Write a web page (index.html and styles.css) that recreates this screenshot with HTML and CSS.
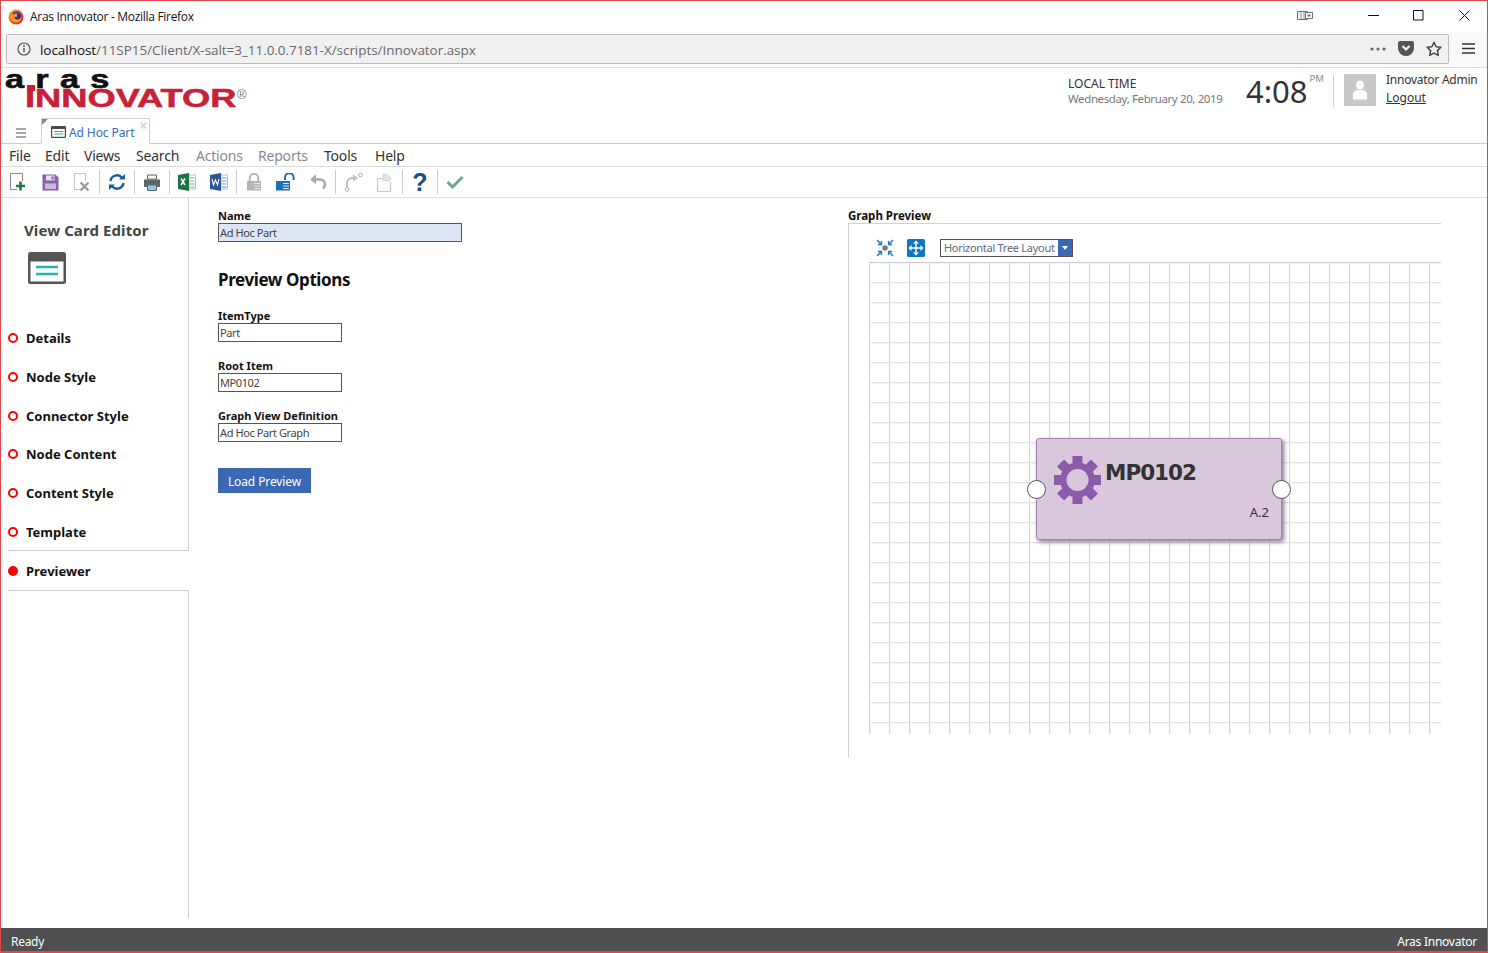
FILE: index.html
```html
<!DOCTYPE html>
<html lang="en">
<head>
<meta charset="utf-8">
<title>Aras Innovator - Mozilla Firefox</title>
<link rel="stylesheet" href="styles.css">
</head>
<body>
<div class="window">
  <div class="titlebar">
    <svg class="ff-logo" width="16" height="16" viewBox="0 0 16 16"><defs><linearGradient id="ffg" x1="0" y1="0" x2="1" y2="1"><stop offset="0" stop-color="#ffb020"/><stop offset="0.55" stop-color="#f2532a"/><stop offset="1" stop-color="#c8102e"/></linearGradient></defs><circle cx="8" cy="8" r="7.5" fill="url(#ffg)"/><circle cx="8.5" cy="7" r="4.6" fill="#2f3a8f"/><path d="M3 3.5C1.5 7 3 13 8 13.5c3.5.3 5.500-2.500 5.500-5.500-1 2-3 3-5 2.600C6.500 10.200 5.700 8.600 7 7.800c1 .2 2 0 2.500-.8C8.500 6.500 8.500 5 9.500 4 7 4 5.500 5 5 6 4.500 5.500 3.700 4.500 3 3.500z" fill="#ff9a1f"/></svg>
    <span class="title-text">Aras Innovator - Mozilla Firefox</span>
    <div class="win-controls">
      <svg class="wc-tabs" width="16" height="11" viewBox="0 0 16 11"><path d="M.5 1.500h10v8h-10z" fill="#f0f0f0" stroke="#6b6f7a"/><path d="M4 2v7M7 2v7" stroke="#9a9da6"/><path d="M8.500 2.500h7v6h-7z" fill="#fff" stroke="#6b6f7a"/><path d="M10.500 4.500h3v2h-3z" fill="#6b6f7a"/></svg>
      <svg class="wc-min" width="11" height="11" viewBox="0 0 11 11"><path d="M0 5.500h11" stroke="#111"/></svg>
      <svg class="wc-max" width="11" height="11" viewBox="0 0 11 11"><path d="M.5.500h9.500v9.500H.5z" fill="none" stroke="#111"/></svg>
      <svg class="wc-close" width="11" height="11" viewBox="0 0 11 11"><path d="M.5.500l10 10M10.500.500l-10 10" stroke="#111"/></svg>
    </div>
  </div>

  <div class="navbar">
    <div class="urlbar">
      <svg class="url-info" width="14" height="14" viewBox="0 0 14 14"><circle cx="7" cy="7" r="6" fill="none" stroke="#555" stroke-width="1.200"/><path d="M7 6v4.200" stroke="#555" stroke-width="1.400"/><circle cx="7" cy="4" r=".9" fill="#555"/></svg>
      <span class="url-text"><span class="url-host">localhost</span>/11SP15/Client/X-salt=3_11.0.0.7181-X/scripts/Innovator.aspx</span>
      <div class="url-actions">
        <svg width="16" height="4" viewBox="0 0 16 4"><circle cx="2" cy="2" r="1.600" fill="#666"/><circle cx="8" cy="2" r="1.600" fill="#666"/><circle cx="14" cy="2" r="1.600" fill="#666"/></svg>
        <svg width="16" height="15" viewBox="0 0 16 15"><path d="M2 0h12a2 2 0 0 1 2 2v5a8 8 0 0 1-16 0V2a2 2 0 0 1 2-2z" fill="#555"/><path d="M4.500 5L8 8.500 11.500 5" fill="none" stroke="#f0f0f0" stroke-width="2.200"/></svg>
        <svg width="16" height="16" viewBox="0 0 16 16"><path d="M8 1.300l2.100 4.400 4.800.6-3.500 3.300.9 4.800L8 12.100l-4.300 2.300.9-4.800L1.100 6.300l4.800-.6z" fill="none" stroke="#444" stroke-width="1.500" stroke-linejoin="round"/></svg>
      </div>
    </div>
    <svg class="ff-menu" width="13" height="11" viewBox="0 0 13 11"><path d="M0 1h13M0 5.500h13M0 10h13" stroke="#333" stroke-width="1.500"/></svg>
  </div>

  <header class="app-header">
    <div class="logo">
      <span class="logo-aras">aras</span>
      <span class="logo-inn">INNOVATOR</span>
      <span class="logo-reg">®</span>
    </div>
    <div class="clock-info">
      <div class="local-time">LOCAL TIME</div>
      <div class="local-date">Wednesday, February 20, 2019</div>
    </div>
    <div class="clock"><span class="clock-time">4:08</span><span class="clock-pm">PM</span></div>
    <div class="avatar">
      <svg width="14" height="20" viewBox="0 0 14 20"><ellipse cx="7" cy="5" rx="4" ry="4.600" fill="#fff"/><path d="M0 19.500v-5c0-2.500 3-4 4.500-4.500h5c1.500.5 4.500 2 4.500 4.500v5z" fill="#fff"/></svg>
    </div>
    <div class="user">
      <div class="user-name">Innovator Admin</div>
      <a class="user-logout">Logout</a>
    </div>
  </header>

  <div class="tabstrip">
    <svg class="tab-menu" width="10" height="10" viewBox="0 0 10 10"><path d="M0 1h10M0 5h10M0 9h10" stroke="#8a8a8a" stroke-width="1.300"/></svg>
    <div class="tab">
      <svg width="15" height="12" viewBox="0 0 15 12"><rect width="15" height="12" rx="1" fill="#4a4a4a"/><rect x="1.200" y="3" width="12.600" height="7.800" fill="#fff"/><path d="M2.800 5.500h9.400M2.800 8h9.400" stroke="#26b5b0" stroke-width="1.200"/></svg>
      <span class="tab-label">Ad Hoc Part</span>
      <svg class="tab-close" width="7" height="7" viewBox="0 0 7 7"><path d="M.5.500l6 6M6.500.500l-6 6" stroke="#c9d8ee" stroke-width="1.600"/></svg>
    </div>
  </div>

  <nav class="menubar">
    <span class="menu-item w-file">File</span>
    <span class="menu-item w-edit">Edit</span>
    <span class="menu-item w-views">Views</span>
    <span class="menu-item w-search">Search</span>
    <span class="menu-item w-actions off">Actions</span>
    <span class="menu-item w-reports off">Reports</span>
    <span class="menu-item w-tools">Tools</span>
    <span class="menu-item w-help">Help</span>
  </nav>

  <div class="toolbar">
    <span class="tb"><svg width="18" height="20" viewBox="0 0 18 20"><path d="M8 17.500H1.500v-16h12V9" fill="none" stroke="#8a8a8a"/><path d="M11.500 9.500v9M7 14h9" stroke="#1d7a45" stroke-width="2.600"/></svg></span>
    <span class="tb"><svg width="17" height="17" viewBox="0 0 17 17"><path d="M.5.500h13L16.500 3.500V16.500H.5z" fill="#8b5fa8"/><path d="M4 1.500h8.500v5H4z" fill="#e9e0ee"/><path d="M9.500 2.500h2v3h-2z" fill="#8b5fa8"/><path d="M3 9.500h11v5.500H3z" fill="#cdb8da"/></svg></span>
    <span class="tb"><svg width="18" height="20" viewBox="0 0 18 20"><path d="M7 17.500H1.500v-16h11V9" fill="none" stroke="#c4c4c4"/><path d="M7.500 10.500l8 8M15.500 10.500l-8 8" stroke="#9a9a9a" stroke-width="2.400"/></svg></span>
    <span class="tb-sep"></span>
    <span class="tb"><svg width="18" height="18" viewBox="0 0 18 18"><path d="M2.500 8A6.500 6.500 0 0 1 14 4.800" fill="none" stroke="#1f5a9e" stroke-width="2.400"/><path d="M11 6.500h6V1z" fill="#1f5a9e"/><path d="M15.500 10A6.500 6.500 0 0 1 4 13.200" fill="none" stroke="#1f5a9e" stroke-width="2.400"/><path d="M7 11.500H1V17z" fill="#1f5a9e"/></svg></span>
    <span class="tb-sep"></span>
    <span class="tb"><svg width="16" height="17" viewBox="0 0 16 17"><path d="M3.500 1h9v4h-9z" fill="#fff" stroke="#5f6468"/><path d="M0 5.500h16V13h-3v-2H3v2H0z" fill="#5f6468"/><path d="M3.500 11h9v5.500h-9z" fill="#8ec7e8" stroke="#5f6468"/></svg></span>
    <span class="tb-sep"></span>
    <span class="tb"><svg width="18" height="18" viewBox="0 0 18 18"><path d="M11 2h6.500v14H11z" fill="#fff" stroke="#a7c7b2"/><path d="M12 5h4.500M12 8h4.500M12 11h4.500M12 14h4.500" stroke="#78a98a"/><path d="M0 2l11-2v18L0 16z" fill="#1f7244"/><path d="M3 5.500l4 6.500M7 5.500l-4 6.500" stroke="#fff" stroke-width="1.500"/></svg></span>
    <span class="tb"><svg width="18" height="18" viewBox="0 0 18 18"><path d="M11 2h6.500v14H11z" fill="#fff" stroke="#a9bfe0"/><path d="M12 5h4.500M12 8h4.500M12 11h4.500M12 14h4.500" stroke="#6f93cc"/><path d="M0 2l11-2v18L0 16z" fill="#2b579a"/><path d="M2 6l1.500 6 2-5 2 5L9 6" fill="none" stroke="#fff" stroke-width="1.100"/></svg></span>
    <span class="tb-sep"></span>
    <span class="tb"><svg width="16" height="18" viewBox="0 0 16 18"><path d="M3.800 8V5a4.200 4.200 0 0 1 8.400 0v3" fill="none" stroke="#b5b5b5" stroke-width="2"/><path d="M1 8h14v9.500H1z" fill="#b5b5b5"/><path d="M8 10.500h6M8 13h6M8 15.500h6" stroke="#e8e8e8"/></svg></span>
    <span class="tb"><svg width="20" height="18" viewBox="0 0 20 18"><path d="M9 7V4.500a4.300 4.300 0 0 1 8.600 0V7" fill="none" stroke="#1e6fb8" stroke-width="2"/><path d="M0 8h14v9.500H0z" fill="#1e6fb8"/><path d="M7 10.500h6M7 13h6M7 15.500h6" stroke="#dcebf7"/></svg></span>
    <span class="tb"><svg width="17" height="16" viewBox="0 0 17 16"><path d="M1 5.500h9a5 5 0 0 1 5 5v0a5 5 0 0 1-2 4" fill="none" stroke="#a8a8a8" stroke-width="2.600"/><path d="M6 0L.5 5.500 6 10.500z" fill="#a8a8a8"/></svg></span>
    <span class="tb-sep"></span>
    <span class="tb"><svg width="19" height="20" viewBox="0 0 19 20"><path d="M3 15V11a5 5 0 0 1 5-5h2" fill="none" stroke="#bdbdbd" stroke-width="2"/><path d="M9 2.500l5 3.500-5 3.500z" fill="#bdbdbd"/><circle cx="3" cy="17.500" r="1.800" fill="none" stroke="#a8a8a8"/><circle cx="16.500" cy="3" r="1.800" fill="none" stroke="#a8a8a8"/></svg></span>
    <span class="tb"><svg width="16" height="19" viewBox="0 0 16 19"><path d="M.5 5.500h7M.5 5.500v13h13V9" fill="none" stroke="#c8c8c8" stroke-width="1.200"/><path d="M6 1.500h4l4 4 -1.500 2H6z" fill="#e6e6e6" stroke="#cfcfcf"/></svg></span>
    <span class="tb-sep"></span>
    <span class="tb"><span class="tb-help">?</span></span>
    <span class="tb-sep"></span>
    <span class="tb"><svg width="18" height="14" viewBox="0 0 18 14"><path d="M1.500 7l5 5L16.500 2" fill="none" stroke="#6fa593" stroke-width="3"/></svg></span>
  </div>

  <main class="workspace">
    <aside class="sidebar">
      <div class="side-top">
        <h2 class="side-title">View Card Editor</h2>
        <svg class="side-icon" width="38" height="32" viewBox="0 0 38 32"><rect width="38" height="32" rx="2.500" fill="#555"/><rect x="2.500" y="9.500" width="33" height="20" fill="#fff"/><path d="M8 15h22M8 22h22" stroke="#26b5b0" stroke-width="2.600"/></svg>
        <ul class="steps">
          <li class="step"><i class="dot"></i>Details</li>
          <li class="step"><i class="dot"></i>Node Style</li>
          <li class="step"><i class="dot"></i>Connector Style</li>
          <li class="step"><i class="dot"></i>Node Content</li>
          <li class="step"><i class="dot"></i>Content Style</li>
          <li class="step"><i class="dot"></i>Template</li>
        </ul>
      </div>
      <div class="step step-active"><i class="dot dot-on"></i>Previewer</div>
      <div class="side-bottom"></div>
    </aside>

    <section class="form">
      <label class="fld-label">Name</label>
      <div class="input input-wide">Ad Hoc Part</div>
      <h1 class="form-h">Preview Options</h1>
      <label class="fld-label">ItemType</label>
      <div class="input">Part</div>
      <label class="fld-label lbl-gap">Root Item</label>
      <div class="input">MP0102</div>
      <label class="fld-label lbl-gap">Graph View Definition</label>
      <div class="input">Ad Hoc Part Graph</div>
      <button class="load-btn" type="button">Load Preview</button>
    </section>

    <section class="graph">
      <div class="graph-label">Graph Preview</div>
      <div class="graph-panel">
        <div class="graph-tools">
          <svg class="gt-fit" width="18" height="18" viewBox="0 0 18 18"><circle cx="9" cy="9" r="2.800" fill="#7a7a7a"/><path d="M1 1l4 4M17 1l-4 4M1 17l4-4M17 17l-4-4" stroke="#1e78c8" stroke-width="1.500"/><path d="M5.500 2v3.500H2M12.500 2v3.500H16M5.500 16v-3.500H2M12.500 16v-3.500H16" fill="none" stroke="#1e78c8" stroke-width="1.300"/></svg>
          <svg class="gt-move" width="18" height="18" viewBox="0 0 18 18"><rect width="18" height="18" rx="1.500" fill="#0f75c6"/><path d="M9 2.500v13M2.500 9h13" stroke="#fff" stroke-width="1.500"/><path d="M9 1.500l3 3H6zM9 16.500l3-3H6zM1.500 9l3-3v6zM16.500 9l-3-3v6z" fill="#fff"/></svg>
          <div class="layout-select"><span class="ls-text">Horizontal Tree Layout</span><span class="ls-arrow"></span></div>
        </div>
        <div class="canvas">
          <div class="node">
            <svg class="node-gear" width="47" height="48" viewBox="0 0 47 48"><g fill="#8a5cab"><circle cx="23.500" cy="24" r="17.500"/><rect x="18.500" y="0" width="10" height="48"/><rect x="0" y="19" width="47" height="10"/><rect x="18.500" y="0" width="10" height="48" transform="rotate(45 23.500 24)"/><rect x="18.500" y="0" width="10" height="48" transform="rotate(-45 23.500 24)"/></g><circle cx="23.500" cy="24" r="11" fill="#d9c7dc"/></svg>
            <span class="node-title">MP0102</span>
            <span class="node-rev">A.2</span>
            <i class="port port-l"></i>
            <i class="port port-r"></i>
          </div>
        </div>
      </div>
    </section>
  </main>

  <footer class="statusbar"><span class="st-left">Ready</span><span class="st-right">Aras Innovator</span></footer>
</div>
</body>
</html>
```

FILE: styles.css
```css
* { box-sizing: border-box; }
html, body { margin: 0; height: 100%; }
body { background: #fff; overflow: hidden; font-family: "Noto Sans", sans-serif; }
.window {
  height: 953px;
  border: 1px solid #e0484e;
  border-bottom-width: 2px;
  display: flex;
  flex-direction: column;
  background: #fff;
}

.titlebar { height: 31px; display: flex; align-items: center; padding-left: 7px; flex: none; }
.ff-logo { margin-right: 6px; }
.title-text { font: 12px "Open Sans", sans-serif; letter-spacing: -.3px; color: #111; }
.win-controls { margin-left: auto; display: flex; align-items: center; height: 28px; margin-bottom: 3px; }
.wc-tabs { margin-right: 55px; }
.wc-min { margin-right: 34px; }
.wc-max { margin-right: 35px; }
.wc-close { margin-right: 17px; }

.navbar { height: 36px; background: #f9f9fa; border-bottom: 1px solid #dcdcdc; display: flex; align-items: center; padding: 0 12px 2px 5px; flex: none; }
.urlbar { width: 1443px; height: 30px; background: #f0f0f0; border: 1px solid #bdbdbd; border-radius: 2px; display: flex; align-items: center; padding-left: 10px; }
.url-text { margin-left: 9px; padding-top: 2px; font: 13.500px "Open Sans", sans-serif; letter-spacing: -.05px; color: #6a6a6a; white-space: nowrap; }
.url-host { color: #111; }
.url-actions { margin-left: auto; display: flex; align-items: center; gap: 12px; padding-right: 6px; }
.ff-menu { margin-left: 13px; }

.app-header { height: 76px; display: flex; flex: none; position: relative; }
.logo { width: 1067px; height: 50px; position: relative; }
.logo-aras {
  position: absolute; left: 4px; top: 5px;
  font: 700 26px/12px "Liberation Sans", sans-serif;
  letter-spacing: 8.500px; color: #111;
  transform: scaleX(1.32); transform-origin: 0 0;
  -webkit-text-stroke: .6px #111;
}
.logo-inn {
  position: absolute; left: 24px; top: 20px;
  font: 700 25px/20px "Liberation Sans", sans-serif;
  color: #c9203a;
  transform: scaleX(1.45); transform-origin: 0 0;
  -webkit-text-stroke: .5px #c9203a;
}
.logo::after { content: ""; position: absolute; left: 26px; top: 17px; width: 8px; height: 6px; background: #c9203a; }
.logo-reg { position: absolute; left: 236px; top: 20px; font: 13px/14px "Liberation Sans", sans-serif; color: #777; }
.clock-info { width: 178px; padding-top: 8px; }
.local-time { font-size: 12px; line-height: 15px; color: #333; }
.local-date { font-size: 11.500px; line-height: 15px; letter-spacing: -.38px; color: #777; }
.clock { width: 88px; height: 32px; margin-top: 7px; border-right: 1px solid #ccc; display: flex; align-items: flex-start; }
.clock-time { font-size: 31px; line-height: 34px; margin-top: -1px; color: #333; }
.clock-pm { font-size: 9.500px; line-height: 12px; margin: -2px 0 0 2px; color: #888; }
.avatar { width: 32px; height: 32px; margin: 6px 10px 0 10px; background: #c9c9c9; display: flex; align-items: center; justify-content: center; }
.user { padding-top: 3px; }
.user-name { font-size: 12px; line-height: 18px; letter-spacing: -.25px; color: #333; white-space: nowrap; }
.user-logout { display: block; font-size: 12px; line-height: 18px; color: #333; text-decoration: underline; }

.tabstrip { height: 25px; margin-top: -25px; display: flex; align-items: flex-end; border-bottom: 1px solid #ccc; position: relative; padding-left: 15px; flex: none; }
.tab-menu { margin: 0 15px 5px 0; }
.tab {
  width: 109px; height: 26px; margin-bottom: -1px;
  border: 1px solid #d0d0d0; border-bottom: 1px solid #fff;
  display: flex; align-items: center; padding: 2px 0 0 9px; gap: 3px; position: relative; background: #fff;
}
.tab::before { content: ""; position: absolute; left: 0; top: 0; border: 3px solid transparent; border-top-color: #888; border-left-color: #888; }
.tab-label { font-size: 12px; letter-spacing: -.1px; color: #3a6cb8; white-space: nowrap; }
.tab-close { position: absolute; right: 2px; top: 3px; }

.menubar { height: 23px; display: flex; align-items: center; border-bottom: 1px solid #ddd; flex: none; padding-left: 8px; }
.menu-item { font-size: 14px; letter-spacing: -.2px; color: #333; white-space: nowrap; }
.menu-item.off { color: #8a8a8a; }
.w-file { width: 36px; } .w-edit { width: 39px; } .w-views { width: 52px; } .w-search { width: 60px; }
.w-actions { width: 62px; } .w-reports { width: 66px; } .w-tools { width: 51px; }

.toolbar { height: 31px; display: flex; align-items: center; border-bottom: 1px solid #ddd; padding-left: 1px; flex: none; }
.tb { width: 32px; height: 26px; display: flex; align-items: center; justify-content: center; }
.tb-sep { width: 1px; margin: 0 1px; height: 24px; background: #ccc; }
.tb-help { font: 700 25px/26px "Liberation Sans", sans-serif; color: #1d4a8a; }

.workspace { flex: 1; display: flex; min-height: 0; }
.sidebar { width: 188px; flex: none; display: flex; flex-direction: column; }
.side-top { height: 353px; margin-left: 7px; border-right: 1px solid #d0d0d0; border-bottom: 1px solid #d0d0d0; }
.side-title { margin: 22px 0 0 16px; font: 700 15px/20px "Noto Sans", sans-serif; letter-spacing: .1px; color: #444; }
.side-icon { display: block; margin: 12px 0 0 20px; }
.steps { list-style: none; margin: 35px 0 0 -7px; padding: 0; }
.step { height: 38.700px; display: flex; align-items: center; font: 700 13px/16px "Noto Sans", sans-serif; color: #111; padding-left: 7px; }
.dot { width: 10px; height: 10px; border: 2.500px solid #f00; border-radius: 50%; margin-right: 8px; flex: none; }
.dot-on { background: #f00; }
.step-active { height: 39px; }
.side-bottom { height: 328px; margin-left: 7px; border-right: 1px solid #d0d0d0; border-top: 1px solid #d0d0d0; }

.form { width: 659px; flex: none; padding: 12px 0 0 29px; display: flex; flex-direction: column; align-items: flex-start; }
.fld-label { font: 700 11px/12px "Noto Sans", sans-serif; padding-bottom: 1px; color: #111; }
.lbl-gap { margin-top: 18px; }
.input { width: 124px; height: 19px; border: 1px solid #555; font-size: 11px; line-height: 17px; letter-spacing: -.4px; color: #444; padding-left: 1px; }
.input-wide { width: 244px; background: #dde6f4; }
.form-h { margin: 26px 0 19px; font: 700 17px/23px "Noto Sans", sans-serif; letter-spacing: -.4px; color: #111; }
.load-btn { margin-top: 26px; width: 93px; height: 25px; border: 0; background: #3a68b3; color: #fff; font: 12px "Noto Sans", sans-serif; letter-spacing: -.1px; padding: 1px 0 0; }

.graph { flex: 1; padding-top: 12px; }
.graph-label { font: 700 11.500px/12px "Noto Sans", sans-serif; padding-bottom: 1px; color: #111; }
.graph-panel { width: 593px; height: 535px; border-left: 1px solid #d0d0d0; border-top: 1px solid #d0d0d0; padding-left: 20px; }
.graph-tools { height: 38px; display: flex; align-items: center; padding: 9px 0 0 7px; }
.gt-move { margin-left: 13px; }
.layout-select { margin-left: 15px; width: 133px; height: 18px; border: 1px solid #555; display: flex; align-items: center; justify-content: space-between; padding-left: 3px; }
.ls-text { font-size: 11px; letter-spacing: -.28px; color: #667; white-space: nowrap; }
.ls-arrow { width: 14px; height: 16px; background: #3a68b3; position: relative; }
.ls-arrow::after { content: ""; position: absolute; left: 4px; top: 6px; border: 3px solid transparent; border-top: 4px solid #fff; border-bottom: 0; }
.canvas {
  width: 572px; height: 472px; position: relative;
  border-top: 1px solid #c9cbd6;
  background-color: #fff;
  background-image: linear-gradient(90deg, #d8d8d8 1px, #f6f6f6 1px, #f6f6f6 2px, transparent 2px), linear-gradient(#e4e4e4 1px, #f6f6f6 1px, #f6f6f6 2px, transparent 2px);
  background-size: 20px 20px;
  background-position: 0 0, 0 19px;
}
.node {
  position: absolute; left: 167px; top: 175px; width: 246px; height: 102px;
  background: #d9c7dc; border: 1px solid #a77db3; border-radius: 3px;
  box-shadow: 2px 2px 4px rgba(90, 60, 110, .7);
}
.node-gear { position: absolute; left: 17px; top: 17px; }
.node-title { position: absolute; left: 68px; top: 20px; font: 700 21.500px/28px "DejaVu Sans", sans-serif; letter-spacing: -1px; color: #333; }
.node-rev { position: absolute; right: 12px; top: 64px; font-size: 13px; line-height: 18px; color: #333; }
.port { position: absolute; top: 41px; width: 19px; height: 19px; background: #fff; border: 1px solid #555; border-radius: 50%; }
.port-l { left: -10px; }
.port-r { right: -10px; }

.statusbar { height: 23px; background: #505050; color: #fff; display: flex; align-items: center; justify-content: space-between; font-size: 12px; padding: 3px 10px 0; flex: none; }
.st-left { letter-spacing: -.3px; }
.st-right { letter-spacing: -.25px; }
```
